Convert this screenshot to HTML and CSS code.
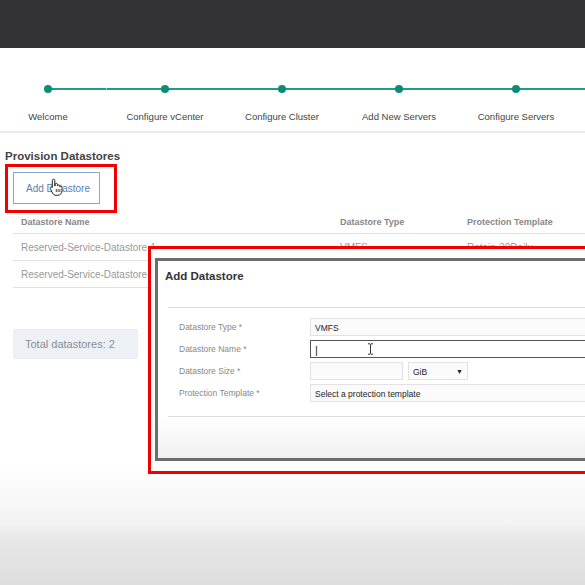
FILE: index.html
```html
<!DOCTYPE html>
<html lang="en">
  <head>
    <meta charset="UTF-8" />
    <meta name="viewport" content="width=device-width, initial-scale=1.0" />
    <title>Provision Datastores</title>
    <link rel="stylesheet" href="styles.css">
  </head>
  <body>
    <div class="topbar"></div>

    <!-- Pasos del asistente -->
    <div class="wizard">
      <div class="steps">
        <div class="step first"><div class="track"><span class="dot"></span></div><span class="label">Welcome</span></div>
        <div class="step"><div class="track"><span class="dot"></span></div><span class="label">Configure vCenter</span></div>
        <div class="step"><div class="track"><span class="dot"></span></div><span class="label">Configure Cluster</span></div>
        <div class="step"><div class="track"><span class="dot"></span></div><span class="label">Add New Servers</span></div>
        <div class="step"><div class="track"><span class="dot"></span></div><span class="label">Configure Servers</span></div>
        <div class="step"><div class="track"></div></div>
      </div>
    </div>

    <div class="content">
      <h2 class="title">Provision Datastores</h2>
      <div class="btn-frame">
        <button class="btn">Add Datastore</button>
        <svg class="hand" width="14" height="18" viewBox="0 0 14 18">
          <path d="M4.5 1.2c.8 0 1.3.6 1.3 1.3V8l.3-.1V6.6c0-.7.5-1.2 1.2-1.2s1.2.5 1.2 1.2v1.3c.1-.6.6-1 1.2-1s1.2.5 1.2 1.2v.8c.1-.5.5-.8 1-.8.6 0 1.1.5 1.1 1.1v3.6c0 2.3-1.7 4.500-4.3 4.5H7c-1.6 0-2.6-.8-3.4-2L1.3 10.6c-.4-.6-.2-1.3.3-1.6.5-.3 1.1-.2 1.5.3l.2.3V2.5c0-.7.5-1.3 1.2-1.3z" fill="#fff" stroke="#222" stroke-width="1"/>
          <path d="M7.3 11v3M9.1 11v3M10.9 11v3" stroke="#222" stroke-width=".8"/>
        </svg>
      </div>

      <div class="table">
        <div class="row head">
          <span class="c-name">Datastore Name</span>
          <span class="c-type">Datastore Type</span>
          <span class="c-tpl">Protection Template</span>
        </div>
        <div class="row">
          <span class="c-name">Reserved-Service-Datastore-1</span>
          <span class="c-type">VMFS</span>
          <span class="c-tpl">Retain-30Daily</span>
        </div>
        <div class="row">
          <span class="c-name">Reserved-Service-Datastore-2</span>
          <span class="c-type">VMFS</span>
          <span class="c-tpl">Retain-30Daily</span>
        </div>
      </div>

      <div class="total">Total datastores: 2</div>
    </div>

    <div class="bottom"></div>

    <!-- Popup Add Datastore -->
    <div class="highlight">
      <div class="modal">
        <h3 class="modal-title">Add Datastore</h3>
        <div class="form">
          <div class="field">
            <label>Datastore Type *</label>
            <div class="input">VMFS</div>
          </div>
          <div class="field">
            <label>Datastore Name *</label>
            <div class="input focus"><span class="caret">|</span></div>
          </div>
          <div class="field">
            <label>Datastore Size *</label>
            <div class="size-wrap">
              <div class="input size"></div>
              <div class="input unit">GiB <span class="arrow">&#9660;</span></div>
            </div>
          </div>
          <div class="field">
            <label>Protection Template *</label>
            <div class="input">Select a protection template</div>
          </div>
        </div>
        <div class="modal-footer"></div>
        <svg class="ibeam" width="7" height="12" viewBox="0 0 7 12">
          <path d="M1 .8h2l.5.5.5-.5h2M3.5 1.3v9.4M1 11.2h2l.5-.5.5.5h2" fill="none" stroke="#333" stroke-width="1"/>
        </svg>
      </div>
    </div>
  </body>
</html>
```

FILE: styles.css
```css
body {
  font-family: "Liberation Sans", Arial, sans-serif;
  background-color: #fff;
  margin: 0;
  padding: 0;
  width: 585px;
  height: 585px;
  overflow: hidden;
  position: relative;
}

.topbar {
  height: 48px;
  background-color: #333337;
}

/* Asistente */
.wizard {
  height: 83px;
  border-bottom: 2px solid #e9e9e9;
  overflow: hidden;
}

.steps {
  display: flex;
  margin-left: -10.5px;
  padding-top: 37px;
}

.step {
  flex: 0 0 117px;
  display: flex;
  flex-direction: column;
  align-items: center;
}

.track {
  width: 100%;
  height: 8px;
  display: flex;
  justify-content: center;
  background: linear-gradient(#1f9b86, #1f9b86) no-repeat center / 100% 2px;
}

.step.first .track {
  background-position: right center;
  background-size: 50% 2px;
}

.dot {
  width: 8px;
  height: 8px;
  border-radius: 50%;
  background-color: #0c8c76;
}

.label {
  margin-top: 18px;
  font-size: 9.5px;
  color: #444;
  white-space: nowrap;
}

/* Contenido */
.content {
  padding-top: 17px;
}

.title {
  margin: 0 0 0 5px;
  font-size: 11.5px;
  font-weight: bold;
  color: #444;
}

.btn-frame {
  position: relative;
  box-sizing: border-box;
  width: 112px;
  height: 49px;
  margin: 2px 0 0 5px;
  border: 3px solid #f20000;
}

.btn {
  margin: 5px 0 0 5px;
  width: 87px;
  height: 32px;
  background-color: #fff;
  border: 1px solid #8aa6cc;
  color: #5a7eb0;
  font-family: "Liberation Sans", Arial, sans-serif;
  font-size: 10px;
  padding: 0 0 0 3px;
}

.hand {
  position: absolute;
  left: 41px;
  top: 11px;
}

.table {
  margin: -2px 0 0 13px;
}

.row {
  display: flex;
  align-items: center;
  height: 26px;
  border-bottom: 1px solid #e2e2e2;
  font-size: 10px;
  color: #999;
  white-space: nowrap;
}

.row.head {
  height: 22px;
  font-weight: bold;
  color: #888;
  font-size: 9px;
}

.c-name {
  width: 319px;
  padding-left: 8px;
}

.c-type {
  width: 127px;
}

.total {
  margin: 41px 0 0 13px;
  width: 113px;
  height: 30px;
  line-height: 30px;
  padding-left: 12px;
  background-color: #edf0f4;
  color: #8a8e94;
  font-size: 11px;
}

/* Fondo inferior */
.bottom {
  position: absolute;
  left: 0;
  right: 0;
  top: 462px;
  bottom: 0;
  background: linear-gradient(#fff, #f3f3f3 50%, #e8e8e8 62%, #dedede);
}

/* Popup */
.highlight {
  position: absolute;
  left: 148px;
  top: 246px;
  width: 460px;
  height: 222px;
  border: 3px solid #f20000;
  background-color: #fdfdfd;
  z-index: 10;
}

.modal {
  position: relative;
  margin: 9px 0 0 4px;
  height: 197px;
  border: 3px solid #6d6d6d;
  background-color: #fff;
  display: flex;
  flex-direction: column;
}

.modal-title {
  margin: 0 0 0 10px;
  padding-top: 9px;
  height: 47px;
  box-sizing: border-box;
  font-size: 11.5px;
  font-weight: bold;
  color: #333;
  text-indent: -3px;
  border-bottom: 1px solid #dcdcdc;
}

.form {
  margin-left: 10px;
  padding: 10px 0 14px 11px;
  border-bottom: 1px solid #dcdcdc;
}

.field {
  display: flex;
  align-items: center;
  margin-bottom: 4px;
}

.field:last-child {
  margin-bottom: 0;
}

.field label {
  width: 131px;
  font-size: 8.5px;
  color: #888;
}

.input {
  flex: 1;
  height: 18px;
  line-height: 18px;
  box-sizing: border-box;
  border: 1px solid #e2e2e2;
  background-color: #fbfbfb;
  font-size: 8.5px;
  color: #222;
  padding-left: 4px;
}

.input.focus {
  border-color: #555;
  background-color: #fff;
}

.caret {
  font-size: 11px;
}

.size-wrap {
  flex: 1;
  display: flex;
  gap: 5px;
}

.input.size {
  flex: 0 0 93px;
}

.input.unit {
  flex: 0 0 60px;
  display: flex;
  justify-content: space-between;
  padding-right: 4px;
}

.arrow {
  font-size: 7px;
}

.modal-footer {
  flex: 1;
  background: linear-gradient(#fff, #f0f0f0);
}

.ibeam {
  position: absolute;
  left: 209px;
  top: 82px;
}
```
